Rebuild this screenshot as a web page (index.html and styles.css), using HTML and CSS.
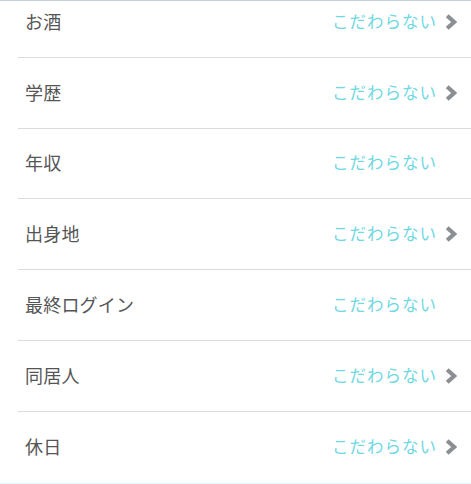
FILE: index.html
```html
<!DOCTYPE html>
<html lang="ja">
<head>
<meta charset="utf-8">
<link rel="stylesheet" href="styles.css">
</head>
<body>
<div class="screen">
  <ul class="list">
    <li class="row"><span class="label">お酒</span><span class="value">こだわらない</span><span class="chev"><svg viewBox="0 0 12 16" width="12" height="16"><path d="M2.2 1.8 L9.2 8 L2.2 14.2" fill="none" stroke="#8b8e93" stroke-width="4.2" stroke-linejoin="miter"/></svg></span></li>
    <li class="row"><span class="label">学歴</span><span class="value">こだわらない</span><span class="chev"><svg viewBox="0 0 12 16" width="12" height="16"><path d="M2.2 1.8 L9.2 8 L2.2 14.2" fill="none" stroke="#8b8e93" stroke-width="4.2" stroke-linejoin="miter"/></svg></span></li>
    <li class="row"><span class="label">年収</span><span class="value">こだわらない</span><span class="chev hidden"></span></li>
    <li class="row"><span class="label">出身地</span><span class="value">こだわらない</span><span class="chev"><svg viewBox="0 0 12 16" width="12" height="16"><path d="M2.2 1.8 L9.2 8 L2.2 14.2" fill="none" stroke="#8b8e93" stroke-width="4.2" stroke-linejoin="miter"/></svg></span></li>
    <li class="row"><span class="label">最終ログイン</span><span class="value">こだわらない</span><span class="chev hidden"></span></li>
    <li class="row"><span class="label">同居人</span><span class="value">こだわらない</span><span class="chev"><svg viewBox="0 0 12 16" width="12" height="16"><path d="M2.2 1.8 L9.2 8 L2.2 14.2" fill="none" stroke="#8b8e93" stroke-width="4.2" stroke-linejoin="miter"/></svg></span></li>
    <li class="row last"><span class="label">休日</span><span class="value">こだわらない</span><span class="chev"><svg viewBox="0 0 12 16" width="12" height="16"><path d="M2.2 1.8 L9.2 8 L2.2 14.2" fill="none" stroke="#8b8e93" stroke-width="4.2" stroke-linejoin="miter"/></svg></span></li>
  </ul>
  <div class="band"></div>
</div>
</body>
</html>
```

FILE: styles.css
```css
html, body {
  margin: 0;
  padding: 0;
  background: #ffffff;
}
body {
  font-family: "Noto Sans CJK JP", "Noto Sans", sans-serif;
}
.screen {
  width: 471px;
  height: 484px;
  overflow: hidden;
  border-top: 1px solid #c3d1d8;
  box-sizing: border-box;
}
.list {
  list-style: none;
  margin: -14px 0 0 18px;
  padding: 0;
}
.row {
  display: flex;
  align-items: center;
  height: 69.8px;
  border-bottom: 1px solid #dcdcdc;
  padding: 0 14px 0 7px;
}
.row.last {
  border-bottom: none;
  height: 70.8px;
}
.label {
  flex: 1;
  font-size: 18px;
  color: #555555;
  letter-spacing: 0.2px;
  margin-top: -2px;
}
.value {
  font-size: 16.5px;
  color: #6fd8e2;
  letter-spacing: 1px;
  margin-right: 8px;
  margin-top: -2px;
}
.chev {
  width: 12px;
  height: 16px;
  display: flex;
}
.chev.hidden {
  visibility: hidden;
}
.band {
  height: 3px;
  background: #def7f8;
}
```
